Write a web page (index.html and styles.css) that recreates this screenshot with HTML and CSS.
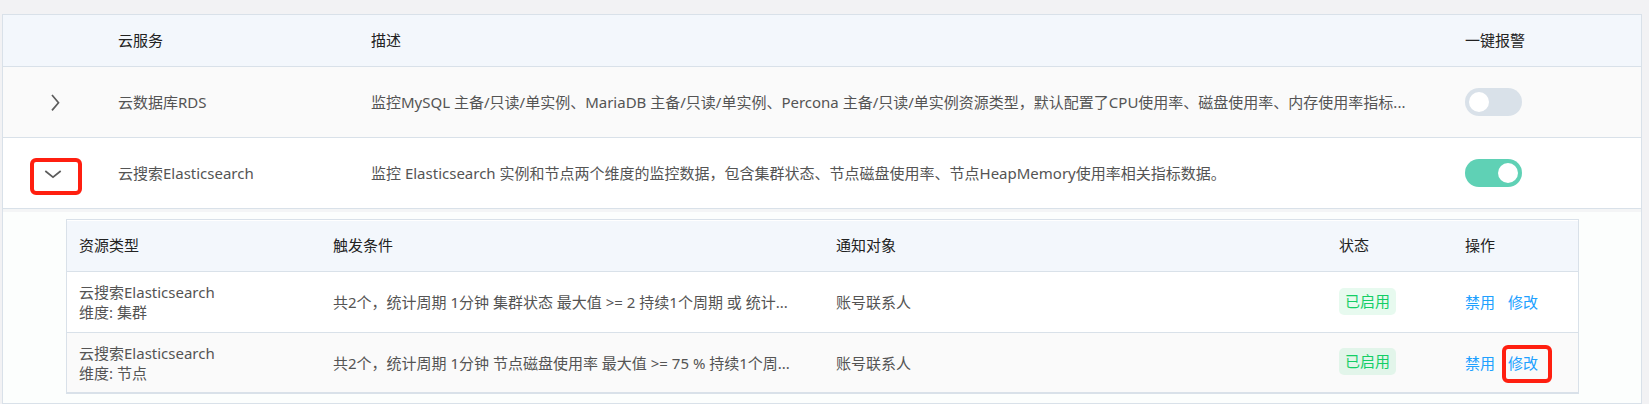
FILE: index.html
```html
<!DOCTYPE html>
<html lang="zh-CN">
<head>
<meta charset="utf-8">
<title>一键报警</title>
<link rel="stylesheet" href="styles.css">
</head>
<body>
<main class="page">
  <table class="services">
    <colgroup>
      <col class="col-expand"><col class="col-service"><col><col class="col-switch">
    </colgroup>
    <thead>
      <tr><th></th><th>云服务</th><th>描述</th><th>一键报警</th></tr>
    </thead>
    <tbody>
      <tr class="service striped">
        <td class="expand-cell">
          <button class="expand" type="button" aria-label="展开" aria-expanded="false">
            <svg class="chevron" viewBox="0 0 18 18"><path d="M8 2 L14.5 9.7 L8 17.4"/></svg>
          </button>
        </td>
        <td>云数据库RDS</td>
        <td class="ellipsis">监控MySQL 主备/只读/单实例、MariaDB 主备/只读/单实例、Percona 主备/只读/单实例资源类型，默认配置了CPU使用率、磁盘使用率、内存使用率指标...</td>
        <td><input class="switch" type="checkbox" aria-label="云数据库RDS 一键报警"></td>
      </tr>
      <tr class="service">
        <td class="expand-cell">
          <button class="expand marked" type="button" aria-label="收起" aria-expanded="true">
            <svg class="chevron" viewBox="0 0 18 18"><path d="M1.3 7 L9 13.2 L16.7 7"/></svg>
          </button>
        </td>
        <td>云搜索Elasticsearch</td>
        <td class="ellipsis">监控 Elasticsearch 实例和节点两个维度的监控数据，包含集群状态、节点磁盘使用率、节点HeapMemory使用率相关指标数据。</td>
        <td><input class="switch" type="checkbox" aria-label="云搜索Elasticsearch 一键报警" checked></td>
      </tr>
      <tr>
        <td class="detail" colspan="4">
          <table class="rules">
            <colgroup>
              <col class="col-type"><col><col><col class="col-status"><col class="col-action">
            </colgroup>
            <thead>
              <tr><th>资源类型</th><th>触发条件</th><th>通知对象</th><th>状态</th><th>操作</th></tr>
            </thead>
            <tbody>
              <tr>
                <td>云搜索Elasticsearch<br>维度: 集群</td>
                <td class="ellipsis">共2个，统计周期 1分钟 集群状态 最大值 &gt;= 2 持续1个周期 或 统计...</td>
                <td>账号联系人</td>
                <td><span class="badge">已启用</span></td>
                <td><div class="actions"><a href="#">禁用</a><a href="#">修改</a></div></td>
              </tr>
              <tr class="striped">
                <td>云搜索Elasticsearch<br>维度: 节点</td>
                <td class="ellipsis">共2个，统计周期 1分钟 节点磁盘使用率 最大值 &gt;= 75 % 持续1个周...</td>
                <td>账号联系人</td>
                <td><span class="badge">已启用</span></td>
                <td><div class="actions"><a href="#">禁用</a><a class="marked" href="#">修改</a></div></td>
              </tr>
            </tbody>
          </table>
        </td>
      </tr>
    </tbody>
  </table>
</main>
</body>
</html>
```
FILE: styles.css
```css
* {
  box-sizing: border-box;
}

body {
  margin: 0;
  background: #f2f2f4;
  color: #545454;
  font: 15px/20px "Noto Sans", "Noto Sans CJK SC", sans-serif;
}

.page {
  padding: 14px 7px 0 2px;
}

table {
  width: 100%;
  table-layout: fixed;
  border-collapse: separate;
  border-spacing: 0;
  border: 1px solid #d9e1e9;
}

th,
td {
  padding: 0 12px;
  text-align: left;
  vertical-align: middle;
}

th {
  height: 52px;
  padding-bottom: 2px;
  background: #f3f7fc;
  border-bottom: 1px solid #d9e1e9;
  color: #222;
  font-weight: 400;
}

.striped {
  background: #fafafa;
}

.ellipsis {
  overflow: hidden;
  text-overflow: ellipsis;
  white-space: nowrap;
}

/* Service list */
.services {
  background: #fff;
}

.col-expand {
  width: 103px;
}

.col-service {
  width: 253px;
}

.col-switch {
  width: 188px;
}

.service td {
  height: 71px;
  border-bottom: 1px solid #d9e1e9;
}

.service .expand-cell {
  padding: 0 0 0 38px;
}

.expand {
  display: grid;
  place-items: center;
  width: 24px;
  height: 24px;
  padding: 0;
  border: 0;
  background: none;
  cursor: pointer;
}

.chevron {
  width: 18px;
  height: 18px;
  fill: none;
  stroke: #5c5c5c;
  stroke-width: 1.7;
}

.switch {
  appearance: none;
  display: block;
  width: 57px;
  height: 28px;
  margin: 0;
  padding: 4px;
  border-radius: 14px;
  background: #d9e1e9;
  cursor: pointer;
}

.switch::before {
  content: "";
  display: block;
  width: 20px;
  height: 20px;
  border-radius: 50%;
  background: #fff;
}

.switch:checked {
  background: #5fd1b5;
}

.switch:checked::before {
  margin-left: auto;
}

/* Expanded rule list */
.services .detail {
  padding: 10px 62px 9px 63px;
  background: #fcfefd;
  box-shadow: inset 0 3px 0 #f4f5f6;
}

.rules {
  border-bottom-width: 2px;
  background: #fff;
}

.rules th {
  border-top: 1px solid #fff;
}

.rules tbody td {
  height: 59px;
}

.rules tbody tr:first-child td {
  height: 61px;
  border-bottom: 1px solid #d9e1e9;
}

.col-type {
  width: 254px;
}

.col-status {
  width: 126px;
}

.col-action {
  width: 125px;
}

.badge {
  display: block;
  width: fit-content;
  margin-bottom: 2px;
  padding: 3px 6px 4px;
  border-radius: 5px;
  background: rgba(19, 206, 102, 0.1);
  color: #13ce66;
}

.actions {
  display: flex;
  gap: 13px;
}

a {
  color: #20a0ff;
  text-decoration: none;
}

/* Red highlight frames */
.marked {
  position: relative;
}

.marked::after {
  content: "";
  position: absolute;
  inset: -3px -17px -10px -11px;
  border: 4px solid #ff1f10;
  border-radius: 6px;
  pointer-events: none;
}

.actions .marked::after {
  inset: -8px -14px -10px -6px;
}
```
